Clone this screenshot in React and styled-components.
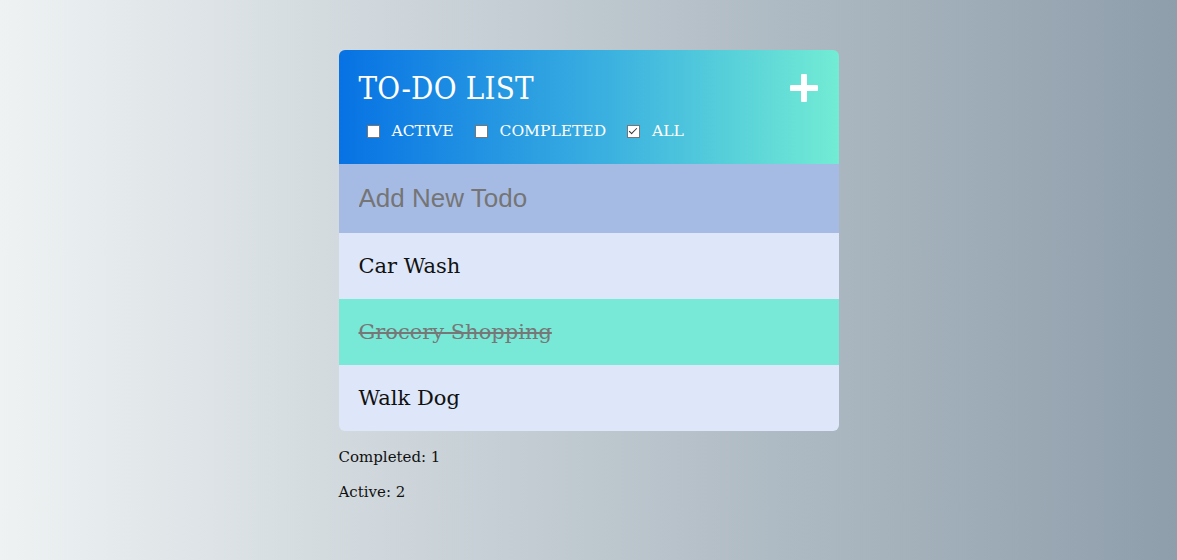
import React, { useState } from 'react'
import styled, { createGlobalStyle } from 'styled-components'

const GlobalStyle = createGlobalStyle`
    html, body {
        margin: 0;
        padding: 0;
    }
    body {
        min-height: 100vh;
        background: linear-gradient(to right, #eef2f3, #8e9eab);
        font-family: "DejaVu Serif", serif;
    }
`

const Page = styled.div`
    width: 100%;
    min-height: 560px;
    display: flex;
    justify-content: center;
    padding-top: 50px;
    box-sizing: border-box;
`

const Column = styled.div`
    width: 500px;
    display: flex;
    flex-direction: column;
`

const Card = styled.div`
    border-radius: 6px;
    overflow: hidden;
`

const Header = styled.div`
    height: 114px;
    box-sizing: border-box;
    padding: 20px 20px 0 20px;
    background: linear-gradient(to right, #0672e4, #3cb2e0 55%, #72ecd4);
    color: #fff;
`

const TitleRow = styled.div`
    display: flex;
    align-items: center;
    justify-content: space-between;
    height: 36px;
`

const Title = styled.h1`
    margin: 0;
    font-family: "DejaVu Serif Condensed", "DejaVu Serif", serif;
    font-size: 31px;
    font-weight: normal;
    letter-spacing: 0.2px;
`

const AddButton = styled.button`
    border: none;
    background: none;
    padding: 0;
    margin-right: 1px;
    cursor: pointer;
    display: flex;
`

const Filters = styled.div`
    display: flex;
    align-items: center;
    margin-top: 16px;
    padding-left: 8px;
`

const Filter = styled.label`
    display: flex;
    align-items: center;
    margin-right: 21px;
    font-size: 15.5px;
    text-transform: uppercase;
    cursor: pointer;
`

const Box = styled.input`
    appearance: none;
    position: relative;
    width: 13px;
    height: 13px;
    margin: 0 12px 0 0;
    box-sizing: border-box;
    border: 1px solid #767676;
    background: #fff;

    &:checked::after {
        content: '';
        position: absolute;
        left: 3px;
        top: 0px;
        width: 3px;
        height: 7px;
        border: solid #333;
        border-width: 0 1.5px 1.5px 0;
        transform: rotate(45deg);
    }
`

const NewTodo = styled.input`
    display: block;
    width: 100%;
    height: 69px;
    box-sizing: border-box;
    border: none;
    outline: none;
    padding: 0 20px;
    background: #a6bbe4;
    font-family: "Liberation Sans", Arial, sans-serif;
    font-size: 26px;
    color: #333;

    ::placeholder {
        color: #757575;
    }
`

const Item = styled.div`
    height: 66px;
    display: flex;
    align-items: center;
    padding: 0 20px;
    font-size: 21px;
    background: ${p => (p.done ? '#78e9d7' : '#dde7f9')};
    color: ${p => (p.done ? '#777' : '#111')};
    text-decoration: ${p => (p.done ? 'line-through' : 'none')};
    cursor: pointer;
`

const Stats = styled.div`
    margin-top: 17px;
    font-size: 15px;
    color: #111;

    p {
        margin: 0 0 17px 0;
    }
`

const Plus = () => (
    <svg width="28" height="28" viewBox="0 0 28 28">
        <path d="M14 2v24M2 14h24" stroke="#fff" strokeWidth="6" strokeLinecap="round" />
    </svg>
)

const todos = [
    { text: 'Car Wash', done: false },
    { text: 'Grocery Shopping', done: true },
    { text: 'Walk Dog', done: false },
]

const App = () => {
    const [filter] = useState('all')
    const completed = todos.filter(t => t.done).length

    return (
        <Page>
            <GlobalStyle />
            <Column>
                <Card>
                    <Header>
                        <TitleRow>
                            <Title>TO-DO LIST</Title>
                            <AddButton><Plus /></AddButton>
                        </TitleRow>
                        <Filters>
                            <Filter><Box type="checkbox" checked={filter === 'active'} readOnly />Active</Filter>
                            <Filter><Box type="checkbox" checked={filter === 'completed'} readOnly />Completed</Filter>
                            <Filter><Box type="checkbox" checked={filter === 'all'} readOnly />All</Filter>
                        </Filters>
                    </Header>
                    <NewTodo placeholder="Add New Todo" />
                    {todos.map(t => (
                        <Item key={t.text} done={t.done}>{t.text}</Item>
                    ))}
                </Card>
                <Stats>
                    <p>Completed: {completed}</p>
                    <p>Active: {todos.length - completed}</p>
                </Stats>
            </Column>
        </Page>
    )
}

export default App
